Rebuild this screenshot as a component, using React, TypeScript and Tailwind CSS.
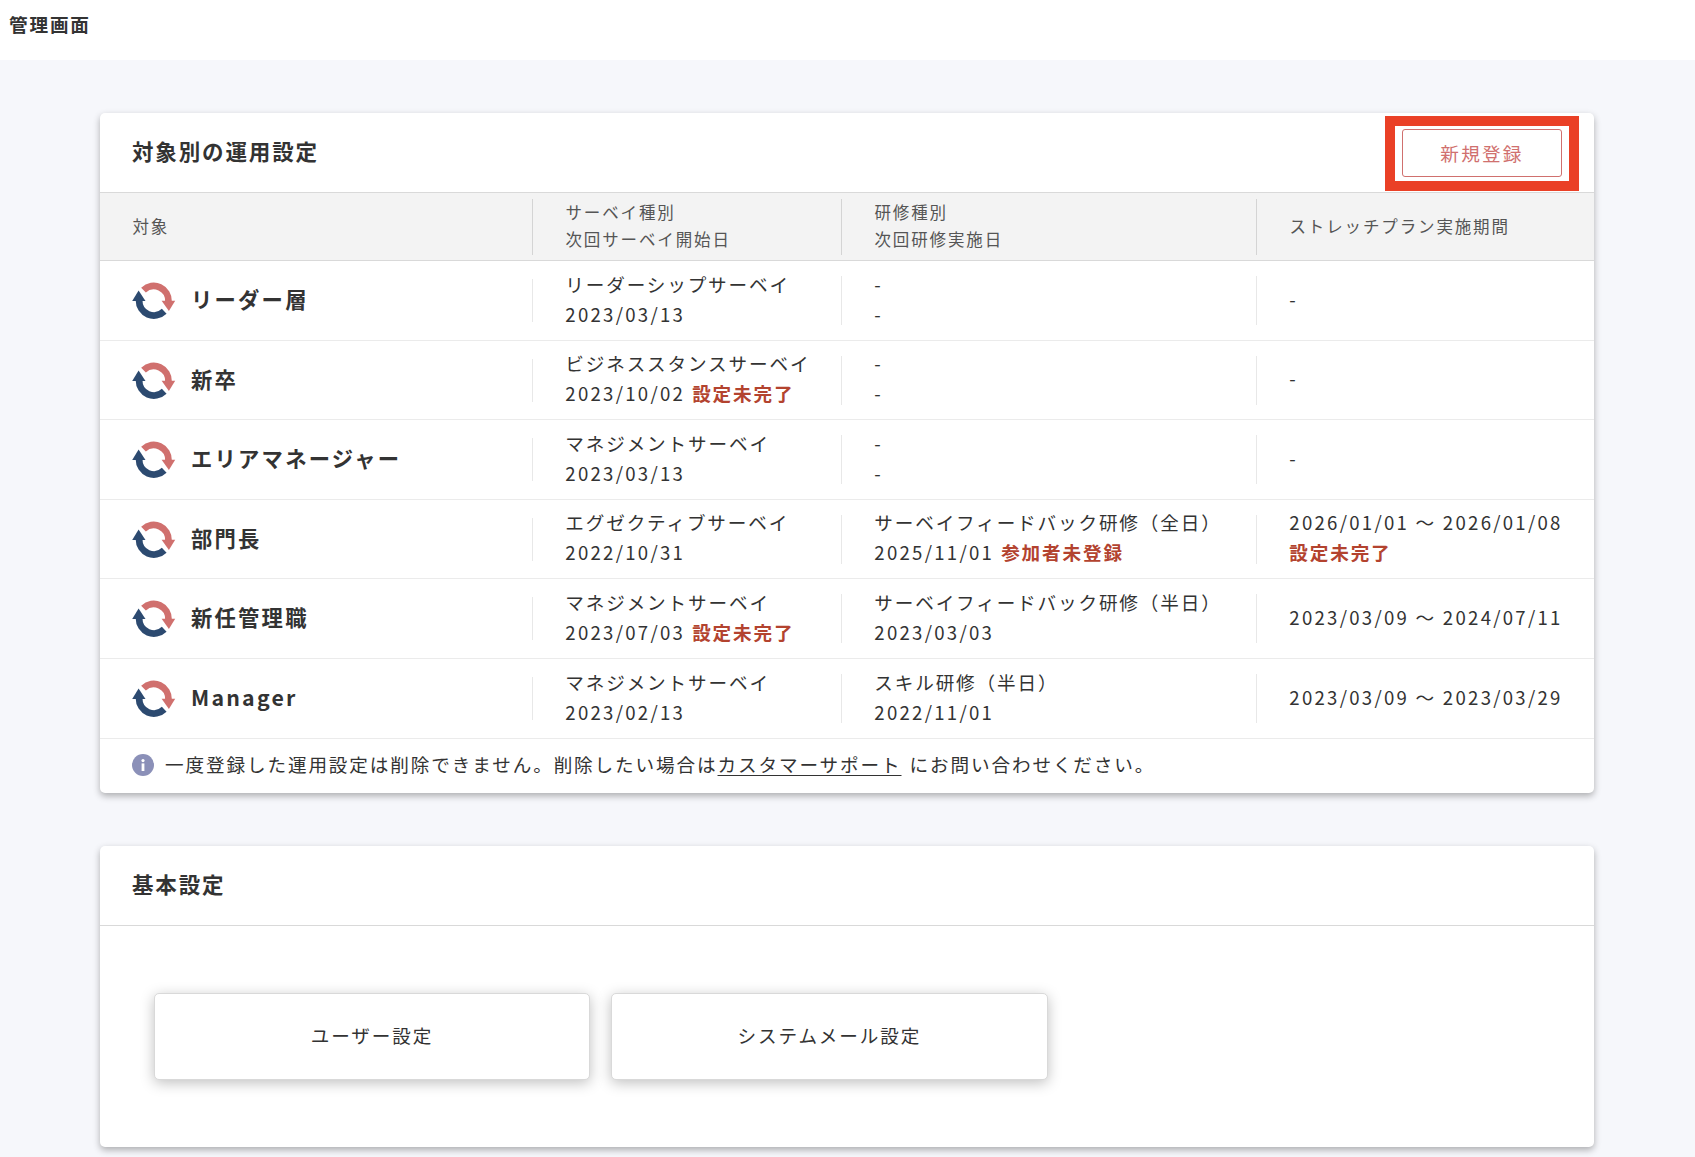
import { clsx } from 'clsx';

type Line = { text: string; alert?: string };

type Target = {
  name: string;
  height: string;
  survey: Line[];
  training: Line[];
  plan: Line[];
};

const TARGETS: Target[] = [
  {
    name: 'リーダー層',
    height: 'h-20',
    survey: [{ text: 'リーダーシップサーベイ' }, { text: '2023/03/13' }],
    training: [{ text: '-' }, { text: '-' }],
    plan: [{ text: '-' }],
  },
  {
    name: '新卒',
    height: 'h-[79px]',
    survey: [{ text: 'ビジネススタンスサーベイ' }, { text: '2023/10/02', alert: '設定未完了' }],
    training: [{ text: '-' }, { text: '-' }],
    plan: [{ text: '-' }],
  },
  {
    name: 'エリアマネージャー',
    height: 'h-20',
    survey: [{ text: 'マネジメントサーベイ' }, { text: '2023/03/13' }],
    training: [{ text: '-' }, { text: '-' }],
    plan: [{ text: '-' }],
  },
  {
    name: '部門長',
    height: 'h-[79px]',
    survey: [{ text: 'エグゼクティブサーベイ' }, { text: '2022/10/31' }],
    training: [{ text: 'サーベイフィードバック研修（全日）' }, { text: '2025/11/01', alert: '参加者未登録' }],
    plan: [{ text: '2026/01/01 〜 2026/01/08' }, { text: '', alert: '設定未完了' }],
  },
  {
    name: '新任管理職',
    height: 'h-20',
    survey: [{ text: 'マネジメントサーベイ' }, { text: '2023/07/03', alert: '設定未完了' }],
    training: [{ text: 'サーベイフィードバック研修（半日）' }, { text: '2023/03/03' }],
    plan: [{ text: '2023/03/09 〜 2024/07/11' }],
  },
  {
    name: 'Manager',
    height: 'h-20',
    survey: [{ text: 'マネジメントサーベイ' }, { text: '2023/02/13' }],
    training: [{ text: 'スキル研修（半日）' }, { text: '2022/11/01' }],
    plan: [{ text: '2023/03/09 〜 2023/03/29' }],
  },
];

const SETTINGS = ['ユーザー設定', 'システムメール設定'];

const GRID = 'grid grid-cols-[432px_309px_415px_1fr] items-center';

export default function App() {
  return (
    <div className="h-[1157px] overflow-hidden bg-[#f6f7fb] font-['Noto_Sans_CJK_JP',sans-serif] text-[18.6px] tracking-[0.1em] text-[#333]">
      <header className="h-[60px] bg-white pl-[9px] pt-[10px]">
        <h1 className="leading-7 font-bold">管理画面</h1>
      </header>

      <main className="flex flex-col gap-[53px] pt-[53px] pl-[100px]">
        <Card title="対象別の運用設定" action={<NewButton />}>
          <div className={clsx(GRID, 'h-[68px] border-b border-[#d9d9d9] bg-[#f3f3f3] text-[16.5px] leading-[27px] text-[#555]')}>
            <div className="pl-[32.5px]">対象</div>
            <HeadCell lines={['サーベイ種別', '次回サーベイ開始日']} />
            <HeadCell lines={['研修種別', '次回研修実施日']} />
            <HeadCell lines={['ストレッチプラン実施期間']} />
          </div>

          {TARGETS.map((t) => (
            <div key={t.name} className={clsx(GRID, t.height, 'border-b border-[#ebebeb]')}>
              <div className="flex items-center pl-8">
                <CycleIcon />
                <span className="ml-[15px] pb-[3px] text-[21.3px] leading-8 font-bold tracking-[0.105em]">{t.name}</span>
              </div>
              <Cell lines={t.survey} divider="h-[43px]" />
              <Cell lines={t.training} divider="h-[49px]" />
              <Cell lines={t.plan} divider="h-[49px]" />
            </div>
          ))}

          <div className="flex h-[54px] items-center pl-8">
            <InfoIcon />
            <p className="ml-[11px] pb-[5px] leading-[30px] tracking-[1.89px]">
              一度登録した運用設定は削除できません。削除したい場合は
              <a href="#" className="underline decoration-1 underline-offset-[3px] [text-decoration-skip-ink:none]">カスタマーサポート</a>
              <span className="ml-2">にお問い合わせください。</span>
            </p>
          </div>
        </Card>

        <Card title="基本設定">
          <div className="flex h-[221px] gap-[21px] pt-[67px] pl-[53.8px]">
            {SETTINGS.map((s) => (
              <button
                key={s}
                className="h-[87px] w-[436.4px] rounded-[5px] border border-[#d9d9d9] bg-white pb-1 tracking-[0.1em] shadow-[0_3px_14px_rgba(0,0,0,0.25)]"
              >
                {s}
              </button>
            ))}
          </div>
        </Card>
      </main>
    </div>
  );
}

function Card({ title, action, children }: { title: string; action?: React.ReactNode; children: React.ReactNode }) {
  return (
    <section className="w-[1494px] rounded-[5px] bg-white shadow-[0_3px_7px_rgba(0,0,0,0.3)]">
      <div className="flex h-20 items-center justify-between border-b border-[#d9d9d9] pr-[15px] pl-8">
        <h2 className="pb-[3px] text-[21.5px] leading-8 font-bold">{title}</h2>
        {action}
      </div>
      {children}
    </section>
  );
}

function NewButton() {
  return (
    <div className="mt-0.5 h-[75px] w-[194px] border-[10px] border-[#ea4026] pt-[3px] pl-[7px]">
      <button className="block h-12 w-40 rounded-[3px] border border-[#d0706e] bg-white tracking-[0.12em] text-[#d0706e]">
        新規登録
      </button>
    </div>
  );
}

function HeadCell({ lines }: { lines: string[] }) {
  return (
    <div className={clsx('flex h-14 flex-col justify-center border-l border-[#d4d4d4] pl-[32.5px]', lines.length > 1 && 'pb-0.5')}>
      {lines.map((l) => (
        <span key={l}>{l}</span>
      ))}
    </div>
  );
}

function Cell({ lines, divider }: { lines: Line[]; divider: string }) {
  return (
    <div className={clsx('flex flex-col justify-center border-l border-[#e8e8e8] pb-1 pl-[32.3px] leading-[29.7px] whitespace-nowrap', divider)}>
      {lines.map((l, i) => (
        <div key={i}>
          {/* dates are set a little wider than the Japanese text */}
          <span className={clsx(/^\d/.test(l.text) && 'tracking-[2.27px]')}>{l.text}</span>
          {l.alert && <span className={clsx('font-bold text-[#b3432f]', l.text && 'ml-[7px]')}>{l.alert}</span>}
        </div>
      ))}
    </div>
  );
}

// Two opposing arrows chasing each other round a circle
function CycleIcon() {
  return (
    <svg width="44" height="39" viewBox="0 0 44 39" fill="none" className="shrink-0">
      <path d="M11.5 9.1A14.8 14.8 0 0 1 36.5 20.6" stroke="#d0706e" strokeWidth="6.8" />
      <path d="M29.6 19.8H43.2L36.9 30Z" fill="#d0706e" />
      <path d="M32.2 30.3A14.8 14.8 0 0 1 7.1 19.5" stroke="#2c4a70" strokeWidth="6.8" />
      <path d="M0.2 20H13.5L6.6 9.4Z" fill="#2c4a70" />
    </svg>
  );
}

function InfoIcon() {
  return (
    <svg width="22" height="22" viewBox="0 0 22 22" className="mb-0.5 shrink-0">
      <circle cx="11" cy="11" r="11" fill="#8b90b8" />
      <circle cx="11" cy="6.6" r="1.6" fill="#fff" />
      <rect x="9.6" y="9.4" width="2.8" height="7.6" fill="#fff" />
    </svg>
  );
}
